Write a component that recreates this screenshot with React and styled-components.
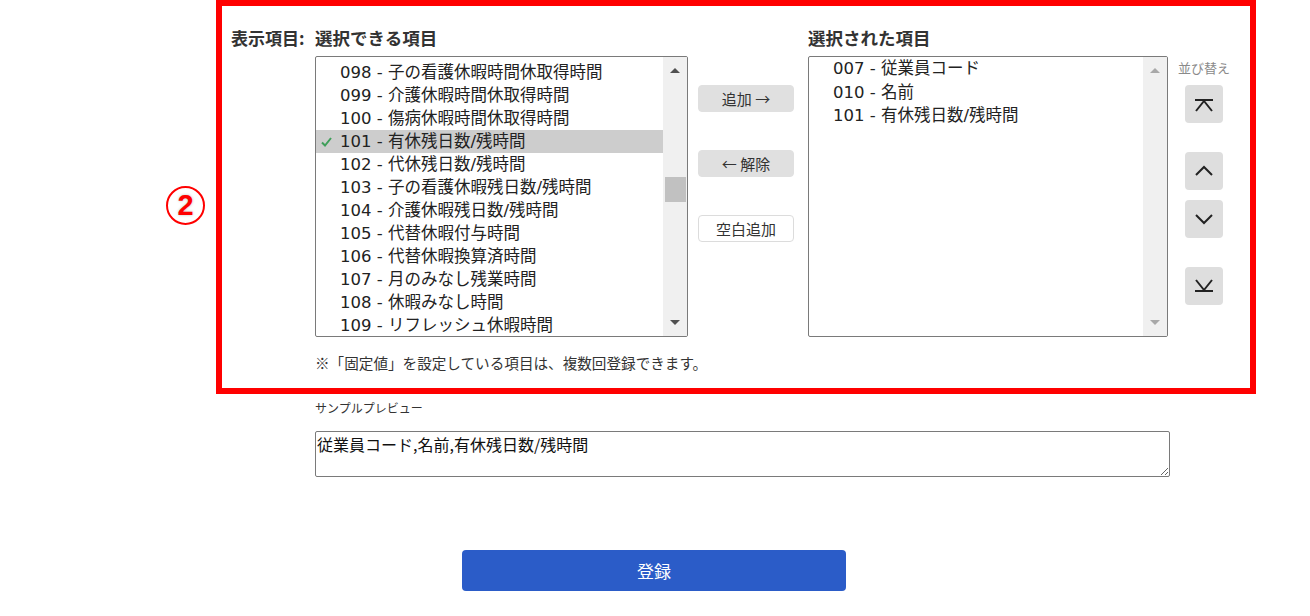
import React from "react";
import styled, { createGlobalStyle } from "styled-components";

const GlobalStyle = createGlobalStyle`
  body {
    margin: 0;
    background: #fff;
    font-family: "Noto Sans CJK JP", "Noto Sans", sans-serif;
    color: #222;
  }
`;

const S = {
  Page: styled.div`
    width: 1310px;
    height: 616px;
    overflow: hidden;
  `,
  TopRow: styled.div`
    display: flex;
    align-items: stretch;
  `,
  Gutter: styled.div`
    width: 216px;
    display: flex;
    align-items: center;
    justify-content: flex-end;
    padding: 16px 11px 0 0;
    box-sizing: border-box;
  `,
  Marker: styled.span`
    width: 39px;
    height: 39px;
    box-sizing: border-box;
    border: 2.5px solid #f00;
    border-radius: 50%;
    display: flex;
    align-items: center;
    justify-content: center;
    color: #f00;
    font-family: "Liberation Sans", Arial, sans-serif;
    font-weight: 700;
    font-size: 29px;
    line-height: 1;
    text-shadow: 0 0 3px rgba(0, 0, 0, 0.25);
    box-shadow: 0 0 3px rgba(255, 255, 255, 0.9);
  `,
  Frame: styled.section`
    width: 1040px;
    box-sizing: border-box;
    border: 6px solid #f00;
    padding: 21px 0 15px 9px;
    display: flex;
  `,
  FieldLabel: styled.div`
    width: 84px;
    flex: none;
    font-size: 17px;
    font-weight: 700;
    line-height: 22px;
    color: #333;
    white-space: nowrap;
  `,
  Body: styled.div`
    display: flex;
    flex-direction: column;
  `,
  Columns: styled.div`
    display: flex;
    align-items: flex-start;
  `,
  ListColumn: styled.div`
    width: ${(p) => p.width}px;
    margin-left: ${(p) => p.offset || 0}px;
    display: flex;
    flex-direction: column;
  `,
  Heading: styled.div`
    font-size: 17.5px;
    font-weight: 700;
    line-height: 22px;
    color: #333;
    margin-bottom: 7px;
  `,
  ListBox: styled.div`
    height: 281px;
    box-sizing: border-box;
    border: 1px solid #7a7a7a;
    border-radius: 2px;
    display: flex;
    align-items: flex-start;
    overflow: hidden;
    background: #fff;
  `,
  Items: styled.ul`
    flex: 1;
    list-style: none;
    margin: ${(p) => p.offset}px 0 0 0;
    padding: 0;
  `,
  Item: styled.li`
    position: relative;
    height: ${(p) => p.rowHeight}px;
    line-height: ${(p) => p.rowHeight}px;
    padding-left: 24px;
    font-family: "DejaVu Sans", "Noto Sans CJK JP", sans-serif;
    font-size: 16.5px;
    color: #222;
    white-space: nowrap;
    background: ${(p) => (p.selected ? "#cdcdcd" : "transparent")};
  `,
  Check: styled.svg`
    position: absolute;
    left: 5px;
    top: 7px;
  `,
  Scrollbar: styled.div`
    width: 24px;
    height: 100%;
    flex: none;
    background: #f0f0f0;
    display: flex;
    flex-direction: column;
  `,
  ArrowBox: styled.div`
    height: 27px;
    flex: none;
    display: flex;
    align-items: center;
    justify-content: center;
  `,
  Triangle: styled.span`
    width: 0;
    height: 0;
    border-left: 5.5px solid transparent;
    border-right: 5.5px solid transparent;
    ${(p) => (p.down ? "border-top" : "border-bottom")}: 5px solid ${(p) =>
      p.muted ? "#a8a8a8" : "#505050"};
  `,
  Track: styled.div`
    flex: 1;
  `,
  Thumb: styled.div`
    margin: ${(p) => p.top}px 1px 0 2px;
    height: 25px;
    background: #c1c1c1;
  `,
  ButtonColumn: styled.div`
    width: 96px;
    margin-left: 10px;
    padding-top: 58px;
    display: flex;
    flex-direction: column;
    gap: 38px;
  `,
  MoveButton: styled.button`
    height: 27px;
    box-sizing: border-box;
    border: 1px solid ${(p) => (p.outline ? "#dcdcdc" : "#e0e0e0")};
    border-radius: 4px;
    background: ${(p) => (p.outline ? "#fff" : "#e0e0e0")};
    color: #333;
    font-family: inherit;
    font-size: 15px;
    line-height: 1;
    padding: 0;
    cursor: pointer;
  `,
  SortColumn: styled.div`
    width: 52px;
    margin-left: 10px;
    padding-top: 33px;
    display: flex;
    flex-direction: column;
    align-items: center;
  `,
  SortLabel: styled.div`
    font-size: 13px;
    line-height: 16px;
    color: #8a8a8a;
    white-space: nowrap;
    margin-bottom: 9px;
  `,
  SortButton: styled.button`
    width: 38px;
    height: 38px;
    margin-top: ${(p) => p.gap || 0}px;
    border: none;
    border-radius: 4px;
    background: #dedede;
    padding: 0;
    display: flex;
    align-items: center;
    justify-content: center;
    cursor: pointer;
  `,
  Note: styled.div`
    margin-top: 16px;
    font-size: 14.6px;
    line-height: 20px;
    color: #333;
    white-space: nowrap;
  `,
  Preview: styled.div`
    padding-left: 315px;
  `,
  PreviewLabel: styled.div`
    margin-top: 5px;
    font-size: 12px;
    line-height: 18px;
    color: #333;
  `,
  PreviewText: styled.textarea`
    display: block;
    margin-top: 14px;
    width: 855px;
    height: 46px;
    box-sizing: border-box;
    border: 1px solid #7a7a7a;
    border-radius: 2px;
    padding: 1px;
    font-family: inherit;
    font-size: 16px;
    line-height: 22px;
    color: #111;
  `,
  Submit: styled.button`
    display: block;
    margin: 73px 0 0 462px;
    width: 384px;
    height: 41px;
    border: none;
    border-radius: 4px;
    background: #2b5cc8;
    color: #fff;
    font-family: inherit;
    font-size: 17px;
    cursor: pointer;
  `,
};

const AVAILABLE = [
  "098 - 子の看護休暇時間休取得時間",
  "099 - 介護休暇時間休取得時間",
  "100 - 傷病休暇時間休取得時間",
  "101 - 有休残日数/残時間",
  "102 - 代休残日数/残時間",
  "103 - 子の看護休暇残日数/残時間",
  "104 - 介護休暇残日数/残時間",
  "105 - 代替休暇付与時間",
  "106 - 代替休暇換算済時間",
  "107 - 月のみなし残業時間",
  "108 - 休暇みなし時間",
  "109 - リフレッシュ休暇時間",
];

const SELECTED = ["007 - 従業員コード", "010 - 名前", "101 - 有休残日数/残時間"];

function SortIcon({ kind }) {
  return (
    <svg width="20" height="20" viewBox="0 0 20 20" fill="none" stroke="#222" strokeWidth="2">
      {kind === "top" && (
        <>
          <line x1="1" y1="6" x2="19" y2="6" />
          <polyline points="2,17 10,7 18,17" />
        </>
      )}
      {kind === "up" && <polyline points="2,14 10,6 18,14" />}
      {kind === "down" && <polyline points="2,6 10,14 18,6" />}
      {kind === "bottom" && (
        <>
          <line x1="1" y1="15" x2="19" y2="15" />
          <polyline points="2,4 10,14 18,4" />
        </>
      )}
    </svg>
  );
}

function ListBox({ items, selectedIndex, offset, rowHeight, thumbTop, muted }) {
  return (
    <S.ListBox>
      <S.Items offset={offset}>
        {items.map((item, idx) => (
          <S.Item key={idx} rowHeight={rowHeight} selected={idx === selectedIndex}>
            {idx === selectedIndex && (
              <S.Check width="11" height="10" viewBox="0 0 11 10">
                <polyline points="1,5.5 4,8.5 10,1" fill="none" stroke="#3f9f5a" strokeWidth="2" />
              </S.Check>
            )}
            {item}
          </S.Item>
        ))}
      </S.Items>
      <S.Scrollbar>
        <S.ArrowBox>
          <S.Triangle muted={muted} />
        </S.ArrowBox>
        <S.Track>{thumbTop != null && <S.Thumb top={thumbTop} />}</S.Track>
        <S.ArrowBox>
          <S.Triangle down muted={muted} />
        </S.ArrowBox>
      </S.Scrollbar>
    </S.ListBox>
  );
}

export default function App() {
  return (
    <S.Page>
      <GlobalStyle />
      <S.TopRow>
        <S.Gutter>
          <S.Marker>2</S.Marker>
        </S.Gutter>
        <S.Frame>
          <S.FieldLabel>表示項目:</S.FieldLabel>
          <S.Body>
            <S.Columns>
              <S.ListColumn width={373}>
                <S.Heading>選択できる項目</S.Heading>
                <ListBox items={AVAILABLE} selectedIndex={3} offset={4} rowHeight={23} thumbTop={93} />
              </S.ListColumn>
              <S.ButtonColumn>
                <S.MoveButton>追加 →</S.MoveButton>
                <S.MoveButton>← 解除</S.MoveButton>
                <S.MoveButton outline>空白追加</S.MoveButton>
              </S.ButtonColumn>
              <S.ListColumn width={360} offset={14}>
                <S.Heading>選択された項目</S.Heading>
                <ListBox items={SELECTED} selectedIndex={-1} offset={0} rowHeight={23.5} muted />
              </S.ListColumn>
              <S.SortColumn>
                <S.SortLabel>並び替え</S.SortLabel>
                <S.SortButton>
                  <SortIcon kind="top" />
                </S.SortButton>
                <S.SortButton gap={29}>
                  <SortIcon kind="up" />
                </S.SortButton>
                <S.SortButton gap={10}>
                  <SortIcon kind="down" />
                </S.SortButton>
                <S.SortButton gap={29}>
                  <SortIcon kind="bottom" />
                </S.SortButton>
              </S.SortColumn>
            </S.Columns>
            <S.Note>※「固定値」を設定している項目は、複数回登録できます。</S.Note>
          </S.Body>
        </S.Frame>
      </S.TopRow>
      <S.Preview>
        <S.PreviewLabel>サンプルプレビュー</S.PreviewLabel>
        <S.PreviewText readOnly defaultValue="従業員コード,名前,有休残日数/残時間" />
      </S.Preview>
      <S.Submit>登録</S.Submit>
    </S.Page>
  );
}
